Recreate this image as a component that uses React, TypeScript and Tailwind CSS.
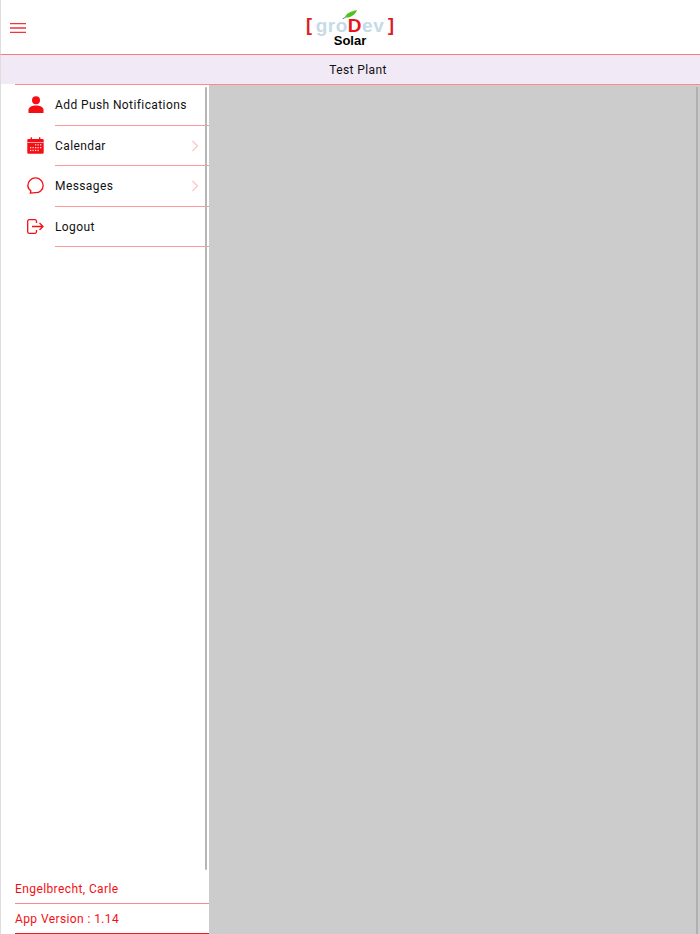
const Chevron = () => (
    <svg width="8" height="12" viewBox="0 0 8 12" fill="none" stroke="#fbc4c4" strokeWidth="1.2" className="absolute right-[10px] top-[14px]">
        <path d="M1.5 1 L6.5 6 L1.5 11" />
    </svg>
);

const MenuIcon = () => (
    <svg width="16" height="10" viewBox="0 0 16 10" fill="none" stroke="#f0353a" strokeWidth="1.3" className="mt-[1px]">
        <path d="M0 0.7 H16 M0 5 H16 M0 9.3 H16" />
    </svg>
);

const PersonIcon = () => (
    <svg width="16" height="17" viewBox="0 0 16 17" fill="#f50f14">
        <circle cx="8" cy="4.2" r="4" />
        <path d="M0.5 17 V14 C0.5 11 4.5 9.6 8 9.6 C11.5 9.6 15.5 11 15.5 14 V17 Z" />
    </svg>
);

const CalendarIcon = () => (
    <svg width="17" height="17" viewBox="0 0 17 17">
        <path d="M1.5 2 H15.5 A1.2 1.2 0 0 1 16.7 3.2 V15.5 A1.2 1.2 0 0 1 15.5 16.7 H1.5 A1.2 1.2 0 0 1 0.3 15.5 V3.2 A1.2 1.2 0 0 1 1.5 2 Z" fill="#f50f14" />
        <rect x="3.6" y="0.3" width="1.4" height="3" fill="#f50f14" />
        <rect x="12" y="0.3" width="1.4" height="3" fill="#f50f14" />
        <rect x="0.3" y="5" width="16.4" height="0.8" fill="#ffc9c9" />
        <g fill="#ffd6d6">
            <rect x="8" y="7.2" width="1.3" height="1.3" />
            <rect x="10.5" y="7.2" width="1.3" height="1.3" />
            <rect x="13" y="7.2" width="1.3" height="1.3" />
            <rect x="3" y="10" width="1.3" height="1.3" />
            <rect x="5.5" y="10" width="1.3" height="1.3" />
            <rect x="8" y="10" width="1.3" height="1.3" />
            <rect x="10.5" y="10" width="1.3" height="1.3" />
            <rect x="13" y="10" width="1.3" height="1.3" />
            <rect x="3" y="12.8" width="1.3" height="1.3" />
            <rect x="5.5" y="12.8" width="1.3" height="1.3" />
            <rect x="8" y="12.8" width="1.3" height="1.3" />
            <rect x="10.5" y="12.8" width="1.3" height="1.3" />
        </g>
    </svg>
);

const MessageIcon = () => (
    <svg width="17" height="17" viewBox="0 0 18 18" fill="none" stroke="#f50f14" strokeWidth="1.4">
        <path d="M4 14.6 C2 13.2 0.9 11.2 0.9 9 C0.9 4.6 4.5 1 9 1 C13.5 1 17.1 4.6 17.1 9 C17.1 13.4 13.5 16.6 9 16.6 C7.6 16.6 5.5 16.8 3.6 17 C3.9 16.2 4 15.4 4 14.6 Z" />
    </svg>
);

const LogoutIcon = () => (
    <svg width="17" height="15" viewBox="0 0 17 15" fill="none" stroke="#f50f14" strokeWidth="1.3">
        <path d="M9.5 4 V2.2 A1.5 1.5 0 0 0 8 0.7 H2.2 A1.5 1.5 0 0 0 0.7 2.2 V12.8 A1.5 1.5 0 0 0 2.2 14.3 H8 A1.5 1.5 0 0 0 9.5 12.8 V11" />
        <path d="M5 7.5 H16 M12.5 4 L16 7.5 L12.5 11" />
    </svg>
);

const items = [
    { label: "Add Push Notifications", icon: <PersonIcon />, chevron: false },
    { label: "Calendar", icon: <CalendarIcon />, chevron: true },
    { label: "Messages", icon: <MessageIcon />, chevron: true },
    { label: "Logout", icon: <LogoutIcon />, chevron: false },
];

const App = () => {
    return (
        <div className="relative h-[934px] w-[700px] overflow-hidden bg-white font-['Roboto',sans-serif] text-[#111]">
            <header className="flex h-[55px] items-center justify-between border-b border-l border-[#fb7a7a] border-l-[#ddd] pl-[9px]">
                <MenuIcon />
                <div className="relative mr-[306px] flex h-[54px] w-[88px] flex-col items-center">
                    <svg width="15" height="9" viewBox="0 0 15 9" className="absolute left-[36px] top-[10px]">
                        <path d="M3 7.5 C4 3 9 1.5 15 0 C13.5 4.5 9 8 3 7.5 Z" fill="#4fc31f" />
                        <path d="M0.5 9 L3.5 7.2" stroke="#333" strokeWidth="0.7" />
                    </svg>
                    <div className="mt-[16px] flex h-[19px] w-full items-center justify-between font-['Liberation_Sans',sans-serif] text-[19px] font-bold leading-[19px]">
                        <span className="text-[18px] text-[#d81e24]">[</span>
                        <span className="tracking-[0.5px] text-[#c5dbe7]">gro<b className="font-bold text-[#e8131a]">D</b>ev</span>
                        <span className="text-[18px] text-[#d81e24]">]</span>
                    </div>
                    <div className="font-['Liberation_Sans',sans-serif] text-[13px] font-bold leading-[12px] text-black">Solar</div>
                </div>
            </header>

            <div className="flex h-[29px] items-center justify-center border-l border-l-[#ddd] bg-[#f2e9f7] pl-[15px] pt-[1px] text-[12px] tracking-[0.4px] text-[#111]">Test Plant</div>

            <div className="flex h-[850px]">
                <aside className="flex h-full w-[209px] flex-col border-l border-l-[#ddd] bg-white">
                    <div className="ml-[14px] border-t border-[#fb8a8a]" />
                    <nav className="flex-1">
                        {items.map((item) => (
                            <div key={item.label} className="relative flex h-[40.5px] items-center">
                                <div className="flex w-[54px] justify-center pb-[1px] pl-[15px]">
                                    <div className="flex w-[22px] justify-center">{item.icon}</div>
                                </div>
                                <div className="flex h-full flex-1 items-center border-b border-[#fb9a9a] pt-[1px] text-[12px] tracking-[0.4px] text-[#111]">
                                    {item.label}
                                </div>
                                {item.chevron && <Chevron />}
                            </div>
                        ))}
                    </nav>
                    <div className="ml-[14px] text-[12px] tracking-[0.4px] text-[#f50f14]">
                        <div className="flex h-[30px] items-center border-b border-[#fb8a8a]">Engelbrecht, Carle</div>
                        <div className="flex h-[30px] items-center border-b border-[#f01a1f]">App Version : 1.14</div>
                    </div>
                </aside>
                <main className="flex-1 border-t border-[#fb8a8a] bg-[#cccccc]" />
            </div>

            <div className="absolute left-[205px] top-[87px] h-[783px] w-[2px] rounded-full bg-[#b5b5b5]" />
            <div className="absolute left-[696px] top-[87px] h-[847px] w-[2px] bg-[#b0b0b0]" />
        </div>
    );
};

export default App;
